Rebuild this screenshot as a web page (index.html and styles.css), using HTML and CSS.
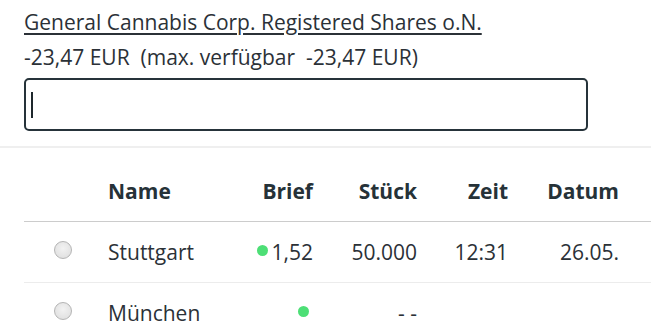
FILE: index.html
```html
<!DOCTYPE html>
<html lang="de">
<head>
<meta charset="utf-8">
<link rel="stylesheet" href="styles.css">
</head>
<body>
<div class="top">
  <a class="title" href="#">General Cannabis Corp. Registered Shares o.N.</a>
  <div class="avail">-23,47 EUR&nbsp;&nbsp;(max. verfügbar&nbsp;&nbsp;-23,47 EUR)</div>
  <div class="field"><span class="caret"></span></div>
</div>
<div class="sep"></div>
<div class="table">
  <div class="row head">
    <div></div>
    <div class="name">Name</div>
    <div class="num">Brief</div>
    <div class="num">Stück</div>
    <div class="num">Zeit</div>
    <div class="num">Datum</div>
    <div></div>
  </div>
  <div class="row">
    <div class="rcell"><span class="radio"></span></div>
    <div class="name">Stuttgart</div>
    <div class="num"><span class="dot"></span>1,52</div>
    <div class="num">50.000</div>
    <div class="num">12:31</div>
    <div class="num">26.05.</div>
    <div></div>
  </div>
  <div class="row last">
    <div class="rcell"><span class="radio"></span></div>
    <div class="name">München</div>
    <div class="num"><span class="dot"></span></div>
    <div class="num">- -</div>
    <div class="num"></div>
    <div class="num"></div>
    <div></div>
  </div>
</div>
</body>
</html>
```
FILE: styles.css
```css
html, body {
  margin: 0;
  padding: 0;
  background: #fff;
  font-family: "Open Sans", "Liberation Sans", sans-serif;
  color: #2b3137;
  font-size: 21px;
}
.top {
  padding: 8px 0 0 24px;
}
.title {
  display: inline-block;
  line-height: 26px;
  color: #2b3137;
  text-decoration: underline;
  text-decoration-thickness: 2px;
  text-underline-offset: 3px;
}
.avail {
  line-height: 26px;
  margin-top: 8px;
}
.field {
  box-sizing: border-box;
  width: 564px;
  height: 53px;
  margin-top: 8px;
  border: 2px solid #26333a;
  border-radius: 5px;
  display: flex;
  align-items: center;
  padding-left: 5px;
}
.caret {
  width: 2px;
  height: 26px;
  background: #1e272c;
}
.sep {
  margin-top: 15px;
  height: 2px;
  background: #efefef;
}
.table {
  padding-left: 24px;
  margin-top: 13px;
}
.row {
  display: grid;
  grid-template-columns: 84px 132px 73px 104px 91px 111px 1fr;
  height: 60px;
  align-items: center;
  border-bottom: 1px solid #ececec;
}
.row.head {
  font-weight: 700;
  border-bottom: 1px solid #cccccc;
  color: #263238;
}
.row.last {
  border-bottom: none;
}
.num {
  text-align: right;
  white-space: nowrap;
}
.rcell {
  padding-left: 30px;
  display: flex;
  align-items: center;
}
.radio {
  box-sizing: border-box;
  width: 18px;
  height: 18px;
  border-radius: 50%;
  border: 1px solid #b4b4b4;
  background: radial-gradient(circle at 50% 40%, #f2f2f2 0%, #dcdcdc 100%);
  margin-top: -4px;
}
.dot {
  display: inline-block;
  width: 11px;
  height: 11px;
  border-radius: 50%;
  background: #4ddf76;
  margin-right: 4px;
  vertical-align: 4px;
}
```
